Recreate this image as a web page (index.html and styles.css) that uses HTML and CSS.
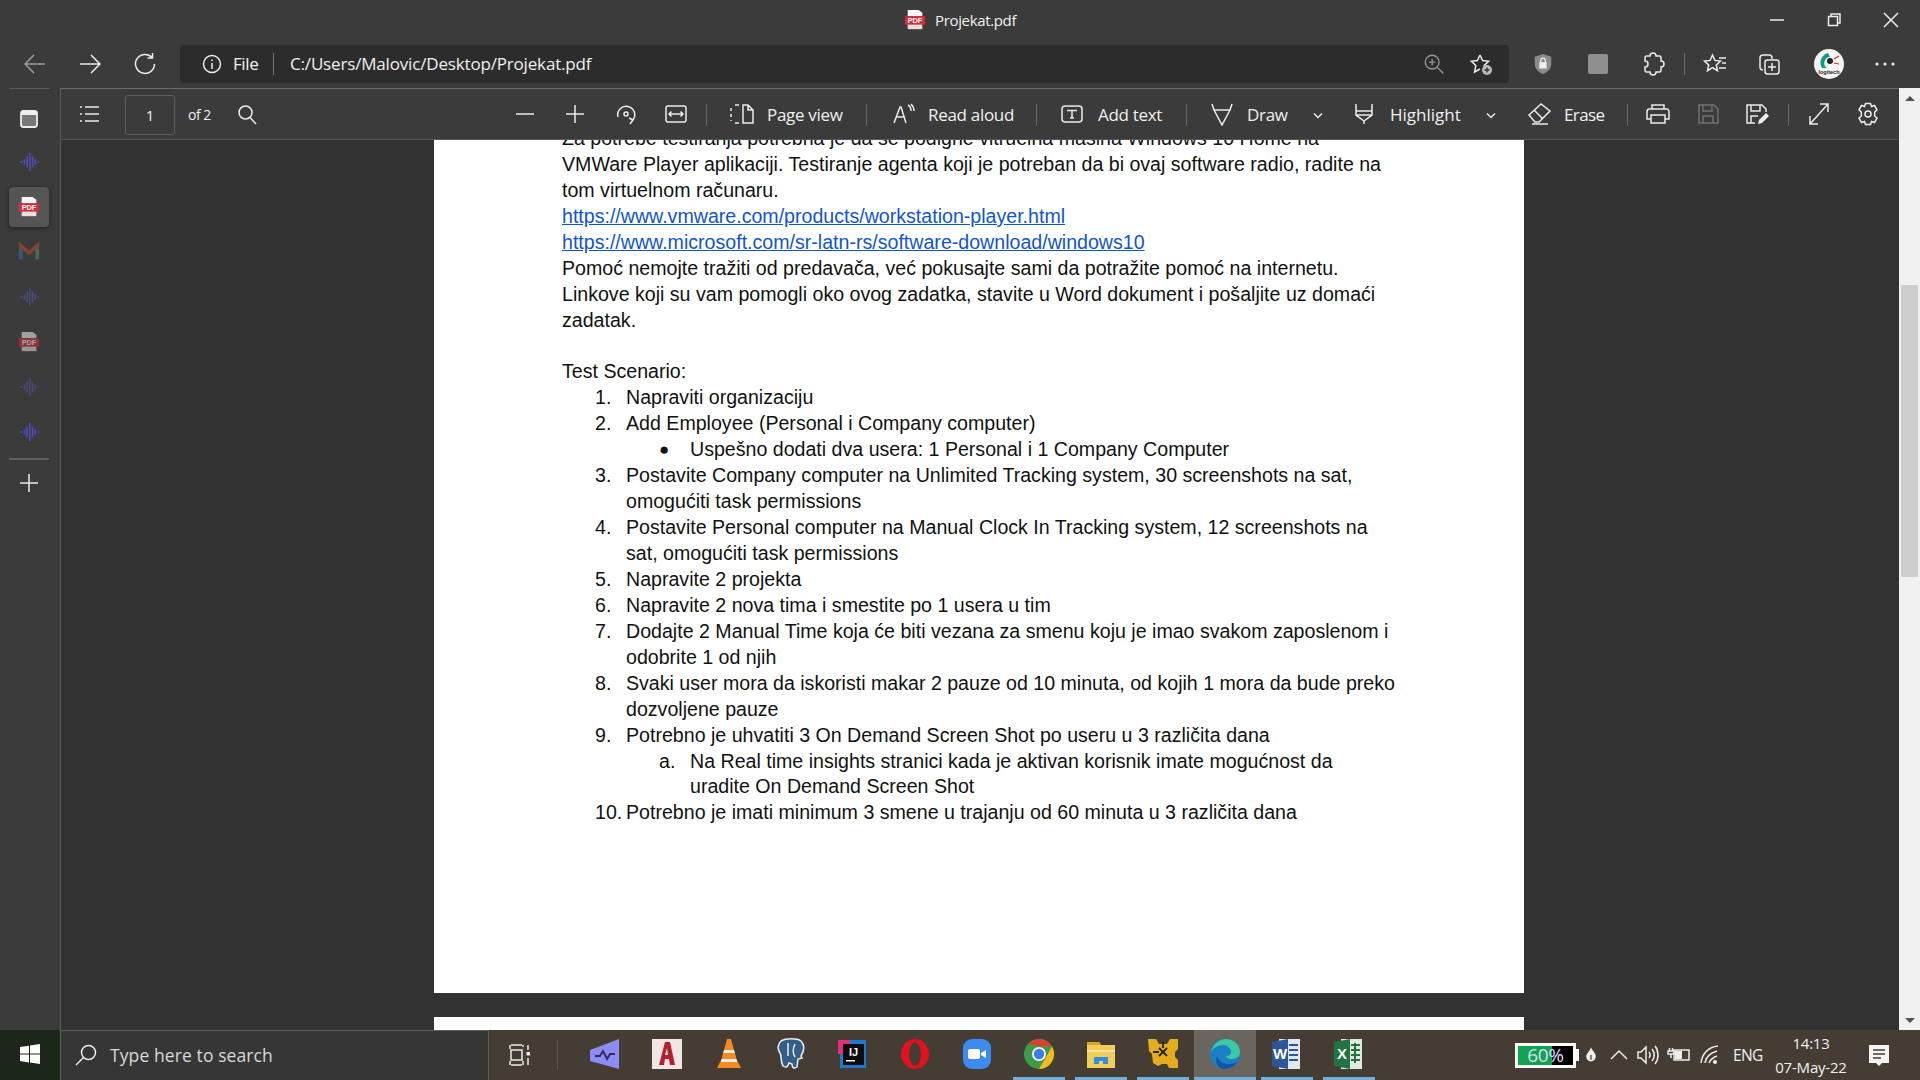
FILE: index.html
```html
<!DOCTYPE html>
<html lang="sr">
<head>
<meta charset="utf-8">
<title>Projekat.pdf</title>
<link rel="stylesheet" href="styles.css">
</head>
<body>
<svg class="defs" width="0" height="0">
  <defs>
    <symbol id="wave" viewBox="0 0 24 24"><path d="M2 12h3M7 9v6M10 6v12M13 2v20M16 6v12M19 9v6M21 12h2" fill="none" stroke="currentColor" stroke-width="1.800"/></symbol>
    <symbol id="pdf" viewBox="0 0 24 24"><path d="M4 1h12l4 3v4H4z" fill="#f4f4f4"/><rect x="1" y="8" width="22" height="9" fill="#d92d3a"/><path d="M4 17h16v5H4z" fill="#f4d9d9"/><text x="12" y="15.500" class="pdf-t">PDF</text></symbol>
  </defs>
</svg>
<div class="app">
  <header class="titlebar">
    <svg class="i22 title-icon" viewBox="0 0 24 24"><use href="#pdf"/></svg>
    <span class="title-text">Projekat.pdf</span>
    <div class="win-controls">
      <svg class="i16" viewBox="0 0 16 16"><path d="M1 8h14" class="ln"/></svg>
      <svg class="i16" viewBox="0 0 16 16"><path d="M2.500 4.500h9v9h-9zM5 4V2h9v9h-2" class="ln"/></svg>
      <svg class="i16" viewBox="0 0 16 16"><path d="M1 1l14 14M15 1L1 15" class="ln"/></svg>
    </div>
  </header>

  <nav class="addressrow">
    <svg class="i24 nav-back dim" viewBox="0 0 24 24"><path d="M22 12H3M11 3l-9 9 9 9" class="ln"/></svg>
    <svg class="i24 nav-next" viewBox="0 0 24 24"><path d="M2 12h19M13 3l9 9-9 9" class="ln"/></svg>
    <svg class="i24 nav-next" viewBox="0 0 24 24"><path d="M19 5.500A9.500 9.500 0 1 0 21.500 12M19.500 1v5h-5" class="ln"/></svg>
    <div class="urlbar">
      <svg class="i20 url-info" viewBox="0 0 20 20"><circle cx="10" cy="10" r="8.500" class="ln"/><path d="M10 9v6M10 5.500v1.500" class="ln"/></svg>
      <span class="url-file">File</span>
      <span class="url-sep"></span>
      <span class="url-text">C:/Users/Malovic/Desktop/Projekat.pdf</span>
      <svg class="i22 url-zoom dim" viewBox="0 0 24 24"><circle cx="10" cy="10" r="7.500" class="ln"/><path d="M15.500 15.500L22 22M10 6.500v7M6.500 10h7" class="ln"/></svg>
      <svg class="i24 url-fav" viewBox="0 0 24 24"><path d="M11 3l2.600 5.600 6 .7-4.400 4.200 1 4.500M11 3L8.400 8.600l-6 .7 4.400 4.200L5.600 20l5.400-3" class="ln"/><circle cx="18" cy="18" r="5" fill="#bbb"/><path d="M18 15.500v5M15.500 18h5" stroke="#333" stroke-width="1.400"/></svg>
    </div>
    <svg class="i22 ext-shield" viewBox="0 0 24 24"><path d="M12 1l9 3v8c0 5-4 9-9 11-5-2-9-6-9-11V4z" fill="#8b8b8b"/><rect x="8" y="10" width="8" height="7" fill="#eee"/><path d="M9.500 10V8a2.500 2.500 0 0 1 5 0v2" fill="none" stroke="#eee" stroke-width="1.400"/></svg>
    <span class="ext-square"></span>
    <svg class="i24 ext-puzzle" viewBox="0 0 24 24"><path d="M9 4a3 3 0 0 1 6 0h3.500a1.500 1.500 0 0 1 1.500 1.500V9a3 3 0 0 1 0 6v3.500a1.500 1.500 0 0 1-1.500 1.500H15a3 3 0 0 1-6 0H5.500A1.500 1.500 0 0 1 4 18.500V15a3 3 0 0 0 0-6V5.500A1.500 1.500 0 0 1 5.500 4z" class="ln"/></svg>
    <span class="row-sep"></span>
    <svg class="i24 ext-favs" viewBox="0 0 24 24"><path d="M9.500 3l2.400 5.400 5.600.6-4.200 3.900 1.200 5.700-5-3-5 3 1.200-5.700L1.500 9l5.600-.6zM16 6h7M19 11h4M16 16h7" class="ln"/></svg>
    <svg class="i24 ext-coll" viewBox="0 0 24 24"><rect x="8" y="8" width="14" height="14" rx="2.500" class="ln"/><path d="M15 11v8M11 15h8M6 18c-2 0-3-1-3-3V6c0-2 1-3 3-3h6c2 0 3 1 3 3v1" class="ln"/></svg>
    <div class="avatar"><svg class="i30" viewBox="0 0 30 30"><circle cx="15" cy="15" r="15" fill="#f4f4f4"/><path d="M14 4a10 10 0 0 0-6 15h5a6 6 0 0 1 3-11z" fill="#0a9d83"/><circle cx="16" cy="12" r="3" fill="#222"/><path d="M20 10l5-3M20 14l5 1" stroke="#c33" stroke-width="1.200"/><text x="15" y="25" class="logi">logitech</text></svg></div>
    <svg class="i24 ext-dots" viewBox="0 0 24 24"><circle cx="4" cy="12" r="1.600" fill="#eee"/><circle cx="12" cy="12" r="1.600" fill="#eee"/><circle cx="20" cy="12" r="1.600" fill="#eee"/></svg>
  </nav>

  <div class="main">
    <aside class="sidebar">
      <div class="side-top-line"></div>
      <svg class="i20 side-panel" viewBox="0 0 20 20"><rect x="2" y="2" width="16" height="16" rx="2.500" fill="#777" stroke="#eee" stroke-width="1.800"/><rect x="2" y="2" width="16" height="4" fill="#eee"/></svg>
      <div class="tab tab-wave"><svg class="i22" viewBox="0 0 24 24"><use href="#wave"/></svg></div>
      <div class="tab tab-active"><svg class="i22" viewBox="0 0 24 24"><use href="#pdf"/></svg></div>
      <div class="tab tab-mail"><svg class="i22" viewBox="0 0 24 24"><path d="M3 20V5l9 8 9-8v15" fill="none" stroke="#8a4a30" stroke-width="4"/><path d="M3 20V9" stroke="#2f5f90" stroke-width="4"/><path d="M21 20V9" stroke="#3f7a60" stroke-width="4"/></svg></div>
      <div class="tab tab-wave-dim"><svg class="i22" viewBox="0 0 24 24"><use href="#wave"/></svg></div>
      <div class="tab tab-pdf-dim"><svg class="i22" viewBox="0 0 24 24"><use href="#pdf"/></svg></div>
      <div class="tab tab-wave-dim"><svg class="i22" viewBox="0 0 24 24"><use href="#wave"/></svg></div>
      <div class="tab tab-wave"><svg class="i22" viewBox="0 0 24 24"><use href="#wave"/></svg></div>
      <div class="side-divider"></div>
      <svg class="i20 side-plus" viewBox="0 0 20 20"><path d="M10 1v18M1 10h18" class="ln"/></svg>
    </aside>

    <section class="viewer">
      <div class="toolbar">
        <svg class="cell ml-9" viewBox="0 0 40 24"><path d="M15 5h14M15 12h14M15 19h14M10 5h2M10 12h2M10 19h2" class="ln"/></svg>
        <span class="pagebox">1</span>
        <span class="lbl ml-13 w-of">of 2</span>
        <svg class="cell ml-14" viewBox="0 0 40 24"><circle cx="18.500" cy="10.500" r="6.500" class="ln"/><path d="M23 15.500l6 6.500" class="ln"/></svg>
        <svg class="cell ml-238" viewBox="0 0 40 24"><path d="M11 12h18" class="ln"/></svg>
        <svg class="cell ml-10" viewBox="0 0 40 24"><path d="M11 12h18M20 3v18" class="ln"/></svg>
        <svg class="cell ml-11" viewBox="0 0 40 24"><path d="M12 15a8.500 8.500 0 1 1 15 3M24 22l3-4-4-2" class="ln"/><circle cx="20" cy="12" r="2" class="ln"/></svg>
        <svg class="cell ml-10" viewBox="0 0 40 24"><rect x="10" y="4" width="20" height="16" rx="2" class="ln"/><path d="M13 12h14M15.500 9.500L13 12l2.500 2.500M24.500 9.500L27 12l-2.500 2.500" class="ln"/></svg>
        <span class="tsep ml-10"></span>
        <svg class="cell ml-14" viewBox="0 0 40 24"><path d="M22 3h5l5 5v13H22zM27 3v5h5M18 3h-4M18 21h-4M10 6v3M10 12v3M10 18v1" class="ln"/></svg>
        <span class="lbl ml-6 w-page">Page view</span>
        <span class="tsep ml-22"></span>
        <svg class="cell ml-16" viewBox="0 0 40 24"><path d="M11 21l6-16h1l5 16M13 15h9M25 3c2 1 3 3 3 6M28 2c2 2 3 4 3 7" class="ln"/></svg>
        <span class="lbl ml-5 w-read">Read aloud</span>
        <span class="tsep ml-23"></span>
        <svg class="cell ml-15" viewBox="0 0 40 24"><rect x="10" y="4" width="20" height="16" rx="3" class="ln"/><path d="M15 8.500h10M20 8.500V16M18 16h4" class="ln"/></svg>
        <span class="lbl ml-6 w-add">Add text</span>
        <span class="tsep ml-23"></span>
        <svg class="cell ml-15" viewBox="0 0 40 24"><path d="M10 2l2 6h16l2-6M12 8l8 15 8-15" class="ln"/></svg>
        <span class="lbl ml-5 w-draw">Draw</span>
        <svg class="chev ml-20" viewBox="0 0 20 24"><path d="M6 10.500l4 4 4-4" class="ln"/></svg>
        <svg class="cell ml-16" viewBox="0 0 40 24"><path d="M12 2v7h16V2M12 9v4l8 6v3M28 9v4l-8 6M12 13h16" class="ln"/></svg>
        <span class="lbl ml-6 w-high">Highlight</span>
        <svg class="chev ml-19" viewBox="0 0 20 24"><path d="M6 10.500l4 4 4-4" class="ln"/></svg>
        <svg class="cell ml-19" viewBox="0 0 40 24"><path d="M21 2L9 13l6 7h4l11-11zM14 8l8 8M12 22h16" class="ln"/></svg>
        <span class="lbl ml-4 w-erase">Erase</span>
        <span class="tsep ml-23"></span>
        <svg class="cell ml-10" viewBox="0 0 40 24"><path d="M14 7V3h12v4M13 17H9V9.500A2.500 2.500 0 0 1 11.500 7h17A2.500 2.500 0 0 1 31 9.500V17h-4M13 13h14v8H13z" class="ln"/></svg>
        <svg class="cell ml-10 off" viewBox="0 0 40 24"><path d="M11 3h15l4 4v14H11zM15 3v6h9V3M15 21v-7h10v7" class="ln"/></svg>
        <svg class="cell ml-9" viewBox="0 0 40 24"><path d="M18 21h-8V3h15l4 4v3M14 3v6h9V3M14 21v-7h7" class="ln"/><path d="M21 22l1-4 7-7 3 3-7 7z" fill="#eee"/></svg>
        <span class="tsep ml-11"></span>
        <svg class="cell ml-10" viewBox="0 0 40 24"><path d="M11 22L29 2M21 2h8v8M11 14v8h8" class="ln"/></svg>
        <svg class="cell ml-9" viewBox="0 0 40 24"><path d="M17.500 1.500h5l1 3 3-1 2.500 4.300-2.300 2.200v4l2.300 2.200L26.500 20.500l-3-1-1 3h-5l-1-3-3 1L11 16.200l2.300-2.200v-4L11 7.800l2.500-4.300 3 1z" class="ln"/><circle cx="20" cy="12" r="3" class="ln"/></svg>
      </div>
      <div class="canvas">
        <article class="page">
          <div class="doc">
            <p>Za potrebe testiranja potrebna je da se podigne vitruelna mašina Windows 10 Home na</p>
            <p>VMWare Player aplikaciji. Testiranje agenta koji je potreban da bi ovaj software radio, radite na</p>
            <p>tom virtuelnom računaru.</p>
            <p><a href="#">https://www.vmware.com/products/workstation-player.html</a></p>
            <p><a href="#">https://www.microsoft.com/sr-latn-rs/software-download/windows10</a></p>
            <p>Pomoć nemojte tražiti od predavača, već pokusajte sami da potražite pomoć na internetu.</p>
            <p>Linkove koji su vam pomogli oko ovog zadatka, stavite u Word dokument i pošaljite uz domaći</p>
            <p>zadatak.</p>
            <p class="blank">&nbsp;</p>
            <p>Test Scenario:</p>
            <ol class="steps">
              <li><span class="m">1.</span><span>Napraviti organizaciju</span></li>
              <li><span class="m">2.</span><span>Add Employee (Personal i Company computer)</span></li>
              <li class="sub"><span class="m m-b">●</span><span>Uspešno dodati dva usera: 1 Personal i 1 Company Computer</span></li>
              <li><span class="m">3.</span><span>Postavite Company computer na Unlimited Tracking system, 30 screenshots na sat,<br>omogućiti task permissions</span></li>
              <li><span class="m">4.</span><span>Postavite Personal computer na Manual Clock In Tracking system, 12 screenshots na<br>sat, omogućiti task permissions</span></li>
              <li><span class="m">5.</span><span>Napravite 2 projekta</span></li>
              <li><span class="m">6.</span><span>Napravite 2 nova tima i smestite po 1 usera u tim</span></li>
              <li><span class="m">7.</span><span>Dodajte 2 Manual Time koja će biti vezana za smenu koju je imao svakom zaposlenom i<br>odobrite 1 od njih</span></li>
              <li><span class="m">8.</span><span>Svaki user mora da iskoristi makar 2 pauze od 10 minuta, od kojih 1 mora da bude preko<br>dozvoljene pauze</span></li>
              <li><span class="m">9.</span><span>Potrebno je uhvatiti 3 On Demand Screen Shot po useru u 3 različita dana</span></li>
              <li class="sub"><span class="m">a.</span><span>Na Real time insights stranici kada je aktivan korisnik imate mogućnost da<br>uradite On Demand Screen Shot</span></li>
              <li><span class="m">10.</span><span>Potrebno je imati minimum 3 smene u trajanju od 60 minuta u 3 različita dana</span></li>
            </ol>
          </div>
        </article>
        <div class="page-next"></div>
      </div>
    </section>

    <div class="scrollbar">
      <div class="sb-btn"><span class="sb-up"></span></div>
      <div class="sb-track"><div class="sb-thumb"></div></div>
      <div class="sb-btn"><span class="sb-down"></span></div>
    </div>
  </div>

  <footer class="taskbar">
    <div class="start"><svg class="i22" viewBox="0 0 22 22"><path d="M1 4l9-1.300V10.500H1zM11 2.500L21 1v9.500H11zM1 11.500h9v8L1 18zM11 11.500h10V21l-10-1.500z" fill="#fff"/></svg></div>
    <div class="search">
      <svg class="i24" viewBox="0 0 24 24"><circle cx="14.500" cy="9.500" r="7" class="ln"/><path d="M9.500 14.500L2 22" class="ln"/></svg>
      <span class="search-text">Type here to search</span>
    </div>
    <svg class="i24 tv" viewBox="0 0 24 24"><path d="M3 2h11M3 22h11M3 7h11v10H3zM2 2v4M15 2v2M2 18v4M15 18v4M20 2v5M20 15v7" class="ln"/><rect x="18.500" y="9" width="3.500" height="3.500" fill="#eee"/></svg>
    <span class="task-sep"></span>
    <div class="apps">
      <div class="app-cell"><svg class="i32" viewBox="0 0 32 32"><path d="M1 12L30 1v30L1 23z" fill="#8c8cf5"/><path d="M6 18h5l3-5 4 8 3-5h5" fill="none" stroke="#332c60" stroke-width="2"/></svg></div>
      <div class="app-cell"><svg class="i32" viewBox="0 0 32 32"><rect width="30" height="30" x="1" y="1" fill="#f1e6e4"/><path d="M8 27L14 4h5l5 23h-5l-1-6h-4l-1 6zM14 17h3l-1-7z" fill="#b5202c"/></svg></div>
      <div class="app-cell"><svg class="i32" viewBox="0 0 32 32"><path d="M14 1h4l3 11H11zM10 15h12l1.500 6h-15zM7 24h18l3 6H4z" fill="#f48b1c"/><path d="M11 12h10l1 3H10zM8.500 21h15l1 3h-17z" fill="#eee"/></svg></div>
      <div class="app-cell"><svg class="i32" viewBox="0 0 32 32"><path d="M6 3c5-3 16-3 20 0 4 4 3 10 0 15l1 2-4 1-1 8c-3 2-5 1-5-3l-3-1c-1 4-3 5-6 3-3-5-1-10-3-13C2 11 3 6 6 3z" fill="#335f85" stroke="#e8eef4" stroke-width="1.500"/><path d="M13 5v13M20 6c-2 4-3 8 0 13" fill="none" stroke="#e8eef4" stroke-width="1.500"/></svg></div>
      <div class="app-cell"><svg class="i32" viewBox="0 0 32 32"><rect x="3" y="2" width="26" height="28" fill="#1a7bd0"/><rect x="1" y="2" width="12" height="14" fill="#e0307a"/><rect x="6" y="6" width="21" height="21" fill="#0c0c10"/><text x="16.500" y="18" class="ij">IJ</text><rect x="9" y="22" width="9" height="1.500" fill="#fff"/></svg></div>
      <div class="app-cell"><svg class="i32" viewBox="0 0 32 32"><ellipse cx="16" cy="16" rx="14" ry="15" fill="#e3101e"/><ellipse cx="16" cy="16" rx="6" ry="11.500" fill="#453d33"/></svg></div>
      <div class="app-cell"><svg class="i32" viewBox="0 0 32 32"><rect x="2" y="1" width="28" height="30" rx="9" fill="#3d8bf0"/><rect x="7" y="11" width="12" height="10" rx="2" fill="#fff"/><path d="M20 15l5-3v8l-5-3z" fill="#fff"/></svg></div>
      <div class="app-cell"><svg class="i32" viewBox="0 0 32 32"><circle cx="16" cy="16" r="15" fill="#3f9b47"/><path d="M16 1a15 15 0 0 1 13 7.500H16L5.500 6A15 15 0 0 1 16 1z" fill="#d9412f"/><path d="M29 8.500A15 15 0 0 1 16 31l6.500-11z" fill="#f2bd1c"/><circle cx="16" cy="16" r="7" fill="#f5f5f5"/><circle cx="16" cy="16" r="5.200" fill="#3e7ee0"/></svg></div>
      <div class="app-cell"><svg class="i32" viewBox="0 0 32 32"><path d="M2 4h12l2 3h14v23H2z" fill="#f3cd5a"/><path d="M2 4h12l2 3H2z" fill="#d9a628"/><path d="M9 26v-7h14v7h-5v-3h-4v3z" fill="#2d8fe0"/><path d="M2 13h28" stroke="#fbe79b" stroke-width="2"/></svg></div>
      <div class="app-cell"><svg class="i32" viewBox="0 0 32 32"><path d="M1 1h8l3 5h8l3-5h8v10l-3 3v5l3 3v8H22l-2-4h-5l-4 2-5-3-1-9-3-3z" fill="#e5ac1f"/><path d="M12 10l8 8M20 10l-8 8M16 4v6M6 14h6" stroke="#2a2a20" stroke-width="2"/></svg></div>
      <div class="app-cell cell-active"><svg class="i32" viewBox="0 0 32 32"><circle cx="16" cy="16" r="15" fill="#1b7fc4"/><path d="M2 14C4 5 11 1 17 1c8 0 14 6 14 13 0 5-4 7-8 7-3 0-6-1-6-3 2 0 5-1 5-4 0-4-4-7-8-7-5 0-10 3-12 7z" fill="#38c9a5"/><path d="M14 31C8 29 6 24 8 18c2 7 9 11 20 6-3 5-8 7-14 7z" fill="#1056a8"/></svg></div>
      <div class="app-cell"><svg class="i32" viewBox="0 0 32 32"><path d="M8 1h21v30H8z" fill="#dfe7f3"/><path d="M18 7h9M18 12h9M18 17h9M18 22h9" stroke="#2b579a" stroke-width="2"/><path d="M1 4l16-3v30L1 28z" fill="#2b579a"/><text x="9" y="21" class="wx">W</text></svg></div>
      <div class="app-cell"><svg class="i32" viewBox="0 0 32 32"><path d="M8 1h21v30H8z" fill="#dfe9df"/><path d="M18 7h9M18 12h9M18 17h9M18 22h9M22 5v20" stroke="#217346" stroke-width="2"/><path d="M1 4l16-3v30L1 28z" fill="#217346"/><text x="9" y="21" class="wx">X</text></svg></div>
    </div>
    <div class="tray">
      <div class="bat-wrap">
        <div class="bat"><span class="bat-fill"></span><span class="bat-text">60%</span></div>
        <span class="bat-nub"></span>
      </div>
      <svg class="i16 t-flame" viewBox="0 0 16 20"><path d="M8 0c1 4 6 7 6 12a6 6 0 0 1-12 0C2 8 7 5 8 0z" fill="#eee"/><path d="M8 10v6" stroke="#333" stroke-width="1.500"/></svg>
      <svg class="i20 t-chev" viewBox="0 0 20 20"><path d="M2 14l8-8 8 8" class="ln"/></svg>
      <svg class="i24 t-vol" viewBox="0 0 24 24"><path d="M2 9h3l5-5v16l-5-5H2zM13 9c1.500 2 1.500 4 0 6M16 6c3 4 3 8 0 12M19 3c4 5 4 13 0 18" class="ln"/></svg>
      <svg class="i24 t-bat" viewBox="0 0 24 24"><path d="M7 7h15v10H7z" class="ln"/><rect x="8" y="8" width="7" height="8" fill="#eee"/><path d="M1 8h6v3H1zM2.500 5v3M5.500 5v3M4 11v4" class="ln"/></svg>
      <svg class="i24 t-wifi" viewBox="0 0 24 24"><path d="M3 20C4 11 10 4 20 3M7 20c1-6 5-10 12-12M11 20c1-3 3-5 8-7" class="ln"/><circle cx="17" cy="19" r="2" fill="#eee"/></svg>
      <span class="t-eng">ENG</span>
      <div class="t-clock"><span>14:13</span><span>07-May-22</span></div>
      <svg class="i24 t-note" viewBox="0 0 24 24"><path d="M2 2h20v18h-7l-3 3-3-3H2z" fill="#f4f4f4"/><path d="M6 7h12M6 11h12M6 15h8" stroke="#453d33" stroke-width="1.300"/></svg>
    </div>
  </footer>
</div>
</body>
</html>
```

FILE: styles.css
```css
* { box-sizing: border-box; }
html, body { margin: 0; padding: 0; width: 1920px; height: 1080px; overflow: hidden; background: #3b3b3b; }
body { font-family: "Open Sans", "Noto Sans", sans-serif; color: #f0f0f0; }
.defs { position: absolute; }
svg { display: block; flex: none; }
.ln { fill: none; stroke: #ececec; stroke-width: 1.500; }
.pdf-t { font: 700 8px "Liberation Sans", sans-serif; fill: #fff; text-anchor: middle; }
.logi { font: 700 5.500px "Liberation Sans", sans-serif; fill: #222; text-anchor: middle; }
.ij { font: 700 11px "Liberation Sans", sans-serif; fill: #fff; text-anchor: middle; }
.wx { font: 700 15px "Liberation Sans", sans-serif; fill: #fff; text-anchor: middle; }
.i16 { width: 16px; height: 16px; }
.i20 { width: 20px; height: 20px; }
.i22 { width: 22px; height: 22px; }
.i24 { width: 24px; height: 24px; }
.i30 { width: 30px; height: 30px; }
.i32 { width: 32px; height: 32px; }
.dim { opacity: .55; }
.off { opacity: .3; }

.app { width: 1920px; height: 1080px; display: flex; flex-direction: column; }

/* title bar */
.titlebar { height: 44px; flex: none; display: flex; align-items: center; padding-left: 904px; padding-bottom: 4px; background: #3b3b3b; }
.title-text { margin-left: 9px; font-size: 15px; letter-spacing: -.35px; }
.win-controls { margin-left: auto; display: flex; gap: 41px; margin-right: 21px; }

/* address row */
.addressrow { height: 44px; flex: none; display: flex; align-items: center; background: #3b3b3b; padding: 0 0 4px 23px; }
.nav-next { margin-left: 31px; }
.urlbar { margin-left: 23px; width: 1329px; height: 38px; border-radius: 4px; background: #2c2c2c; display: flex; align-items: center; padding-left: 22px; }
.url-file { margin-left: 11px; font-size: 17px; letter-spacing: -.4px; width: 26px; padding-bottom: 2px; }
.url-sep { width: 1px; height: 22px; background: #777; margin-left: 14px; }
.url-text { margin-left: 16px; font-size: 17px; letter-spacing: -.17px; width: 1133px; white-space: nowrap; padding-bottom: 2px; }
.url-fav { margin-left: 24px; }
.ext-shield { margin-left: 23px; }
.ext-square { width: 20px; height: 20px; margin-left: 34px; background: #8f8f8f; border-radius: 2px; }
.ext-puzzle { margin-left: 33px; }
.row-sep { width: 1px; height: 22px; background: #6a6a6a; margin-left: 19px; }
.ext-favs { margin-left: 18px; }
.ext-coll { margin-left: 30px; }
.avatar { margin-left: 33px; }
.ext-dots { margin-left: 29px; }

/* main */
.main { flex: 1; min-height: 0; display: flex; }
.sidebar { width: 61px; flex: none; background: #3b3b3b; border-right: 1px solid #5c5c5c; display: flex; flex-direction: column; align-items: center; }
.side-top-line { width: 40px; height: 1px; background: #5c5c5c; }
.side-panel { margin: 20px 2px 8px 0; }
.tab { width: 40px; height: 40px; margin-top: 5px; display: flex; align-items: center; justify-content: center; margin-right: 2px; }
.tab-wave { color: #5050cc; opacity: .85; filter: blur(.5px); }
.tab-wave-dim { color: #4a4a78; filter: blur(.5px); }
.tab-mail { opacity: .8; filter: blur(.5px); }
.tab-active { background: #555; border-radius: 4px; box-shadow: 0 1px 5px #222; }
.tab-pdf-dim { opacity: .55; }
.side-divider { width: 40px; height: 2px; background: #5f5f5f; margin: 6px 2px 0 0; }
.side-plus { margin-top: 13px; margin-right: 2px; }

.viewer { flex: 1; min-width: 0; display: flex; flex-direction: column; }
.toolbar { height: 52px; flex: none; display: flex; align-items: center; background: #3b3b3b; border-top: 1px solid #6a6a6a; border-bottom: 1px solid #555; padding-top: 1px; }
.cell { width: 40px; height: 24px; margin-top: -2px; }
.chev { width: 20px; height: 24px; }
.tsep { width: 1px; height: 22px; background: #6a6a6a; }
.pagebox { margin-left: 15px; width: 50px; height: 40px; border: 1px solid #5f5f5f; border-radius: 3px; display: flex; align-items: center; justify-content: center; font-size: 15px; }
.lbl { font-size: 17px; white-space: nowrap; letter-spacing: -.3px; }
.w-of { width: 25px; font-size: 14px; letter-spacing: -.5px; }
.w-page { width: 77px; }
.w-read { width: 85px; }
.w-add { width: 65px; }
.w-draw { width: 41px; }
.w-high { width: 72px; letter-spacing: 0; }
.w-erase { width: 40px; letter-spacing: -.6px; }
.ml-4 { margin-left: 4px; } .ml-5 { margin-left: 5px; } .ml-6 { margin-left: 6px; }
.ml-9 { margin-left: 9px; } .ml-10 { margin-left: 10px; } .ml-11 { margin-left: 11px; }
.ml-13 { margin-left: 13px; } .ml-14 { margin-left: 14px; } .ml-15 { margin-left: 15px; }
.ml-16 { margin-left: 16px; } .ml-19 { margin-left: 19px; } .ml-20 { margin-left: 20px; }
.ml-22 { margin-left: 22px; } .ml-23 { margin-left: 23px; } .ml-238 { margin-left: 238px; }

.canvas { flex: 1; min-height: 0; overflow: hidden; background: #323232; padding-left: 373px; }
.page { width: 1090px; height: 853px; background: #fff; overflow: hidden; padding-left: 128px; }
.page-next { width: 1090px; height: 40px; background: #fff; margin-top: 24px; }
.doc { margin-top: -14px; font-family: "Liberation Sans", Arial, sans-serif; font-size: 19.600px; line-height: 25.930px; color: #111; white-space: nowrap; }
.doc p { margin: 0; }
.doc a { color: #1155cc; text-decoration: underline; }
.steps { list-style: none; margin: 0; padding: 0 0 0 33px; }
.steps li { display: flex; }
.steps .sub { margin-left: 64px; }
.m { width: 31px; flex: none; }
.m-b { font-size: 17px; }

.scrollbar { width: 21px; flex: none; background: #f0f0f0; display: flex; flex-direction: column; }
.sb-btn { height: 20px; flex: none; display: flex; align-items: center; justify-content: center; }
.sb-up { width: 0; height: 0; border: 5px solid transparent; border-top: 0; border-bottom: 5px solid #505050; }
.sb-down { width: 0; height: 0; border: 5px solid transparent; border-bottom: 0; border-top: 5px solid #505050; }
.sb-track { flex: 1; padding: 177px 2px 0; }
.sb-thumb { height: 292px; background: #cdcdcd; }

/* taskbar */
.taskbar { height: 50px; flex: none; display: flex; align-items: center; background: #453d33; }
.start { width: 60px; height: 100%; background: #1c261a; display: flex; align-items: center; justify-content: center; padding-bottom: 2px; }
.search { width: 429px; height: 100%; background: #363636; border: 1px solid #5f5f5a; border-bottom: 0; display: flex; align-items: center; padding: 0 0 2px 13px; color: #d8d8d8; }
.search-text { margin-left: 12px; font-size: 17.500px; letter-spacing: .1px; }
.tv { margin-left: 19px; }
.task-sep { width: 1px; height: 30px; background: #5c554c; margin-left: 25px; }
.apps { display: flex; margin-left: 16px; height: 100%; }
.app-cell { width: 62px; height: 100%; display: flex; align-items: center; justify-content: center; position: relative; padding-bottom: 2px; }
.app-cell:nth-child(n+8)::after { content: ""; position: absolute; left: 5px; right: 5px; bottom: 0; height: 3px; background: #6fb0e0; }
.cell-active { background: #6a655f; }
.cell-active::after { left: 0 !important; right: 0 !important; }
.tray { margin-left: auto; display: flex; align-items: center; height: 100%; padding-right: 29px; }
.bat-wrap { display: flex; align-items: center; }
.bat { width: 61px; height: 25px; border: 3px solid #fff; background: #000; position: relative; display: flex; align-items: center; justify-content: center; }
.bat-fill { position: absolute; left: 0; top: 0; bottom: 0; width: 34px; background: #11a34f; }
.bat-text { position: relative; font-size: 19px; color: #ddf; letter-spacing: -.3px; }
.bat-nub { width: 3px; height: 12px; background: #fff; }
.t-flame { margin-left: 4px; }
.t-chev { margin-left: 10px; }
.t-vol { margin-left: 7px; }
.t-bat { margin-left: 7px; }
.t-wifi { margin-left: 7px; }
.t-eng { margin-left: 11px; font-size: 15.500px; width: 28px; letter-spacing: -.6px; }
.t-clock { margin-left: 12px; width: 76px; display: flex; flex-direction: column; align-items: center; font-size: 15px; line-height: 24px; letter-spacing: -.2px; white-space: nowrap; }
.t-note { margin-left: 18px; }
```
